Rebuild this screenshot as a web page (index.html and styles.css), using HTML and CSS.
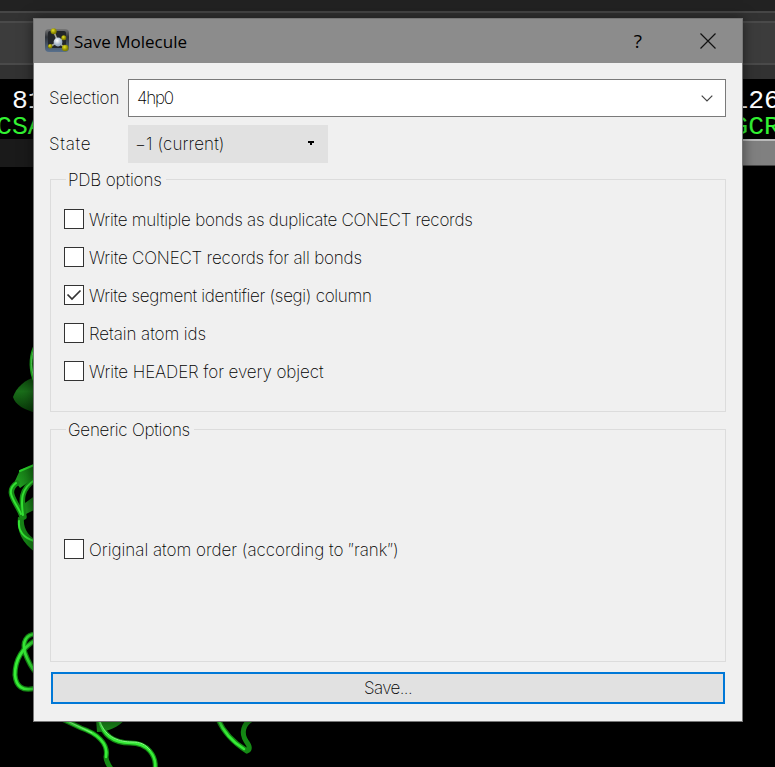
FILE: index.html
```
<!DOCTYPE html>
<html lang="en">
<head>
<meta charset="utf-8">
<title>Save Molecule</title>
<link rel="stylesheet" href="styles.css">
</head>
<body>
<div class="viewer">
  <div class="menu-strip"></div>
  <div class="tool-gap"></div>
  <div class="tool-panel"></div>
  <div class="tool-foot"></div>
  <div class="sequence">
    <div class="seq-left"><span class="num"> 81</span><span class="res">CSA</span></div>
    <div class="seq-right"><span class="num">126</span><span class="res">GCR</span></div>
  </div>
  <div class="scrollbar"><div class="track"></div><div class="thumb"></div></div>
  <svg class="scene" viewBox="0 167 775 600" fill="none" stroke-linecap="round">
    <defs>
      <linearGradient id="cone" x1="0" y1="0" x2="0" y2="1"><stop offset="0" stop-color="#0b430b"/><stop offset=".4" stop-color="#1a6f1a"/><stop offset="1" stop-color="#073507"/></linearGradient>
      <linearGradient id="sheet" x1="0" y1="1" x2="1" y2="0"><stop offset="0" stop-color="#24a724"/><stop offset="1" stop-color="#0e620e"/></linearGradient>
    </defs>
    <path d="M36 377C25 379 16 388 13 397C15 405 25 410 36 413Z" fill="url(#cone)"/>
    <path d="M34 348C30 358 30 371 35 382" stroke="#22c422" stroke-width="3"/>
    <path d="M33 352C30 363 32 372 34 378" stroke="#77ef77" stroke-width=".8"/>
    <path d="M36 464L20 470L15 481L20 488L36 477Z" fill="url(#sheet)"/>
    <path d="M34 465L20 471" stroke="#2bd02b" stroke-width="2"/>
    <path d="M36 495L25 503L22 516L36 509Z" fill="url(#sheet)"/>
    <path d="M18 517C16 530 22 543 36 553V540C27 535 23 527 24 518Z" fill="#168516"/>
    <g stroke="#168c16" stroke-width="5.5"><path d="M17 483C4 492 17 502 22 516"/><path d="M36 479C20 489 21 500 24 517"/></g>
    <g stroke="#34e534" stroke-width="2"><path d="M16 483C4 492 16 502 21 514"/><path d="M36 479C20 489 21 500 23 515"/><path d="M19 521C18 531 24 538 34 541"/></g>
    <g stroke="#158a15" stroke-width="5">
      <path d="M36 634C26 634 22 642 25 653C28 661 31 667 36 673"/>
      <path d="M36 640C20 649 15 662 15 675C16 686 22 692 36 688"/>
      <path d="M62 719L81 728C96 733 109 743 106 757Q106 762 112 770"/>
      <path d="M99 720C104 738 117 743 130 743C148 743 157 756 155 770"/>
      <path d="M218 719C224 733 234 743 247 751Q252 749 246 741C241 733 243 724 252 719"/>
    </g>
    <path d="M96 719H126C118 727 108 732 97 732Z" fill="#198619"/>
    <g stroke="#37ed37" stroke-width="2.6">
      <path d="M36 634C26 634 22 642 25 653C28 661 31 667 36 673"/>
      <path d="M36 640C20 649 15 662 15 675C16 686 22 692 36 688"/>
      <path d="M62 719L81 728C96 733 109 743 106 757"/>
      <path d="M99 720C104 738 117 743 130 743C148 743 157 756 155 770"/>
      <path d="M218 719C224 733 234 743 244 749"/>
    </g>
    <path d="M63 719L82 728L92 733M100 722C106 738 120 742 132 742C140 742 145 744 150 750" stroke="#86fa86" stroke-width="1"/>
  </svg>
</div>

<main class="dialog">
  <header class="titlebar">
    <svg class="logo" viewBox="0 0 24 24">
      <defs>
        <linearGradient id="tile" x1="0" y1="0" x2="0" y2="1"><stop offset="0" stop-color="#777"/><stop offset=".35" stop-color="#30343a"/><stop offset="1" stop-color="#58708d"/></linearGradient>
        <radialGradient id="gold" cx=".4" cy=".35"><stop offset="0" stop-color="#e6e022"/><stop offset="1" stop-color="#858200"/></radialGradient>
        <radialGradient id="pearl" cx=".4" cy=".35"><stop offset="0" stop-color="#fff"/><stop offset="1" stop-color="#9caec2"/></radialGradient>
      </defs>
      <rect x="0" y="1" width="24" height="23" rx="4" fill="url(#tile)"/>
      <rect x="3" y="3" width="18" height="17" rx="2" fill="#23262a"/>
      <path d="M9 4L13 14L19 10M6 18L13 14L20 20" stroke="#a5a69a" stroke-width="1.6" fill="none"/>
      <circle cx="13" cy="14" r="4.4" fill="url(#pearl)"/>
      <g fill="url(#gold)"><circle cx="8.6" cy="3.3" r="3"/><circle cx="18.8" cy="9.8" r="2.5"/><circle cx="5.2" cy="18.2" r="2.2"/><circle cx="20.2" cy="20" r="3.3"/></g>
    </svg>
    <h1>Save Molecule</h1>
    <span class="help">?</span>
    <svg class="close" viewBox="0 0 16 16"><path d="M.5.5L15.5 15.5M15.5.5L.5 15.5" stroke="#111" stroke-width="1.2" fill="none"/></svg>
  </header>
  <div class="content">
    <div class="field"><span class="label t-selection">Selection</span>
      <div class="combo"><span class="t-value">4hp0</span><svg class="chevron" viewBox="0 0 12 7"><path d="M.7.7L6 6L11.3.7" stroke="#444" stroke-width="1.2" fill="none"/></svg></div></div>
    <div class="field state"><span class="label t-state">State</span>
      <div class="dropdown"><span class="t-current">−1 (current)</span><svg class="arrow" viewBox="0 0 6 4" shape-rendering="crispEdges"><path d="M0 0H6V2H4V4H2V2H0Z"/></svg></div></div>
    <section class="group pdb">
      <h2 class="t-pdb">PDB options</h2>
      <div class="check"><i class="box"></i><span class="t-multi">Write multiple bonds as duplicate CONECT records</span></div>
      <div class="check"><i class="box"></i><span class="t-all">Write CONECT records for all bonds</span></div>
      <div class="check"><i class="box"><svg viewBox="0 0 18 18"><path d="M2.5 8.5L7 13L15.5 4.5" stroke="#333" stroke-width="1.7" fill="none"/></svg></i><span class="t-segi">Write segment identifier (segi) column</span></div>
      <div class="check"><i class="box"></i><span class="t-retain">Retain atom ids</span></div>
      <div class="check"><i class="box"></i><span class="t-header">Write HEADER for every object</span></div>
    </section>
    <section class="group generic">
      <h2 class="t-generic">Generic Options</h2>
      <div class="check"><i class="box"></i><span class="t-order">Original atom order (according to ″rank″)</span></div>
    </section>
    <div class="save"><span class="t-save">Save...</span></div>
  </div>
</main>
</body>
</html>
```
FILE: styles.css
```
* { box-sizing: border-box; }
body { margin: 0; width: 775px; height: 767px; overflow: hidden; background: #000; position: relative; }

.viewer { height: 767px; display: flex; flex-direction: column; overflow: hidden; }
.menu-strip { height: 13px; background: #222; border-bottom: 2px solid #464646; flex: none; }
.tool-gap { height: 8px; background: #323232; flex: none; }
.tool-panel { height: 44px; background: #3c3c3c; border: solid #4a4a4a; border-width: 2px 0; flex: none; }
.tool-foot { height: 14px; background: #323232; flex: none; }
.sequence { height: 60px; display: flex; justify-content: space-between; font: 26.5px/26px "Liberation Mono", monospace; padding-top: 9px; flex: none; }
.seq-left, .seq-right { display: flex; flex-direction: column; white-space: pre; }
.seq-left { margin-left: -4px; }
.seq-right { margin-right: -5px; }
.num { color: #fff; }
.res { color: #33f433; }
.scrollbar { height: 28px; display: flex; flex: none; }
.track { width: 400px; background: #1a1a1a; }
.thumb { flex: 1; height: 27px; background: #808080; border-top: 2px solid #bababa; border-bottom: 1px solid #444; }
.scene { width: 775px; height: 600px; flex: none; display: block; }

.dialog { position: absolute; left: 33px; top: 18px; width: 710px; height: 704px; background: #f0f0f0; border: 1px solid #777; box-shadow: 0 0 12px rgba(0, 0, 0, .5); font: 250 17px/24px Inter, sans-serif; color: #000; display: flex; flex-direction: column; }
.titlebar { height: 44px; background: #8c8c8c; display: flex; align-items: center; padding: 0 26px 0 11px; flex: none; }
.logo { width: 24px; height: 24px; margin-top: -2px; overflow: visible; }
h1 { margin: 1px 0 0 5px; font: 17px/24px "Open Sans", sans-serif; }
.help { margin: 0 58px 0 auto; font: 19px/24px "Open Sans", sans-serif; }
.close { width: 16px; height: 16px; }
.content { padding: 16px 16px 0; display: flex; flex-direction: column; white-space: nowrap; }
.field { display: flex; align-items: center; height: 38px; }
.label { width: 79px; margin-left: -1px; flex: none; }
.combo { flex: 1; height: 38px; background: #fff; border: 1px solid #7a7a7a; display: flex; align-items: center; justify-content: space-between; padding: 0 12px 0 8px; }
.chevron { width: 12px; height: 7px; }
.state { margin-top: 8px; }
.dropdown { width: 200px; height: 38px; background: #e1e1e1; display: flex; align-items: center; justify-content: space-between; padding: 0 14px 0 7px; }
.arrow { width: 6px; height: 4px; margin-bottom: 2px; }
.group { border: 1px solid #dcdcdc; display: flex; flex-direction: column; }
.group h2 { font: inherit; margin: -12px 0 0 15px; padding: 0 4px 0 2px; background: #f0f0f0; align-self: flex-start; height: 24px; }
.pdb { height: 233px; margin-top: 16px; }
.generic { height: 233px; margin-top: 17px; }
.check { display: flex; align-items: center; height: 38px; padding-left: 13px; gap: 5px; }
.pdb h2 + .check { margin-top: 9px; }
.generic h2 + .check { margin-top: 89px; }
.box { width: 20px; height: 20px; margin-bottom: 2px; border: 1px solid #333; background: #fff; display: block; flex: none; }
.box svg { display: block; width: 18px; height: 18px; }
.save { height: 32px; margin: 10px 1px 0; border: 2px solid #0078d7; background: #e1e1e1; display: flex; align-items: center; justify-content: center; }

.t-selection { letter-spacing: -.15px; }
.t-state { letter-spacing: .7px; }
.t-value { letter-spacing: -1.2px; }
.t-current { letter-spacing: .1px; }
.group .t-pdb { letter-spacing: -.15px; }
.group .t-generic { letter-spacing: -.25px; }
.t-multi { letter-spacing: -.26px; }
.t-all { letter-spacing: -.2px; }
.t-segi { letter-spacing: -.31px; }
.t-retain { letter-spacing: -.08px; }
.t-header { letter-spacing: -.1px; }
.t-order { letter-spacing: -.02px; }
.t-save { letter-spacing: -.6px; }
```
